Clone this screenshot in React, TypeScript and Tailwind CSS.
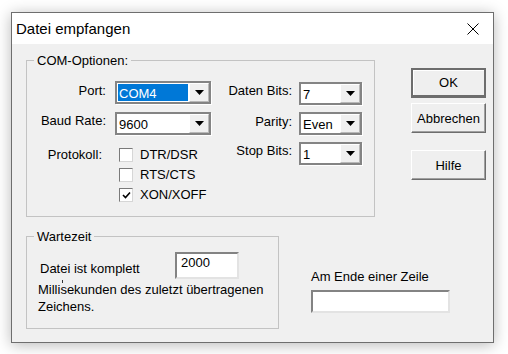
import React from "react";

const font = "font-['Liberation_Sans',Arial,sans-serif]";

const Arrow = () => (
  <svg width="9" height="5" viewBox="0 0 9 5">
    <path d="M0 0H9L4.5 5Z" fill="#000" />
  </svg>
);

interface IComboProps {
  value: string;
  width: string;
  selected?: boolean;
}

const Combo = ({ value, width, selected }: IComboProps) => (
  <div
    className={`${width} h-[23px] flex border-2 border-[#848484] bg-white shadow-[1px_1px_0_#ffffff]`}
  >
    <div className="flex-1 p-[1px]">
      {selected ? (
        <div className="h-full bg-[#0078d7] text-white pl-[1px] pt-[2px] leading-[15px]">
          {value}
        </div>
      ) : (
        <div className="pl-[1px] pt-[2px] leading-[15px]">{value}</div>
      )}
    </div>
    <div className="w-[20px] flex items-center justify-center bg-[#f0f0f0] border-l border-t border-white border-r border-b border-r-[#b8b8b8] border-b-[#b8b8b8]">
      <Arrow />
    </div>
  </div>
);

const Check = ({ label, checked }: { label: string; checked?: boolean }) => (
  <div className="flex items-center h-[14px]">
    <div className="w-[14px] h-[14px] bg-white border border-t-[#7a7a7a] border-l-[#7a7a7a] border-r-[#d6d6d6] border-b-[#d6d6d6] flex items-center justify-center">
      {checked && (
        <svg width="9" height="8" viewBox="0 0 9 8">
          <path d="M1 4L3.5 6.5L8 1.5" stroke="#000" strokeWidth="1.6" fill="none" />
        </svg>
      )}
    </div>
    <span className="ml-[7px] leading-[14px]">{label}</span>
  </div>
);

const Group = ({
  title,
  className,
  children,
}: {
  title: string;
  className: string;
  children: React.ReactNode;
}) => (
  <div className={`relative shrink-0 border border-[#c3c3c3] ${className}`}>
    <span className="absolute left-[7px] -top-[8px] px-[3px] bg-[#f0f0f0] leading-[15px]">
      {title}
    </span>
    {children}
  </div>
);

// one label + combo row
const Row = ({ children }: { children: React.ReactNode }) => (
  <div className="flex items-start h-[23px]">{children}</div>
);

const Button = ({ label, primary }: { label: string; primary?: boolean }) =>
  primary ? (
    <button className="h-[30px] w-full bg-[#efefef] border-2 border-[#6d6d6d] border-b-[3px] shadow-[inset_1px_1px_0_#ffffff] leading-[15px]">
      {label}
    </button>
  ) : (
    <button className="h-[30px] w-full bg-[#efefef] border border-t-white border-l-white border-r-[#6d6d6d] border-b-[#6d6d6d] shadow-[inset_-1px_-1px_0_#a0a0a0] leading-[15px]">
      {label}
    </button>
  );

export default function App() {
  return (
    <div className={`w-[508px] h-[354px] bg-white pt-[12px] pl-[11px] text-[13px] text-black ${font}`}>
      <div className="w-[483px] h-[331px] flex flex-col border border-[#6e6e6e] bg-[#f0f0f0] shadow-[0_2px_14px_rgba(0,0,0,0.28)]">
        {/* title bar */}
        <div className="h-[31px] bg-white flex items-center justify-between pl-[4px] pr-[14px]">
          <span className="text-[15px] leading-[31px]">Datei empfangen</span>
          <svg width="12" height="12" viewBox="0 0 12 12">
            <path d="M0.5 0.5L11.5 11.5M11.5 0.5L0.5 11.5" stroke="#000" strokeWidth="1" />
          </svg>
        </div>

        <div className="flex flex-1">
          <div className="ml-[14px] mt-[16px] w-[349px] shrink-0 flex flex-col">
            <Group title="COM-Optionen:" className="h-[157px]">
              <div className="flex pt-[20px]">
                <div className="w-[184px] flex flex-col">
                  <Row>
                    <span className="w-[79px] text-right mt-[2px] leading-[15px]">Port:</span>
                    <div className="ml-[9px]">
                      <Combo value="COM4" width="w-[96px]" selected />
                    </div>
                  </Row>
                  <div className="mt-[8px]">
                    <Row>
                      <span className="w-[79px] text-right mt-[1px] leading-[15px]">Baud Rate:</span>
                      <div className="ml-[9px]">
                        <Combo value="9600" width="w-[96px]" />
                      </div>
                    </Row>
                  </div>
                  <div className="mt-[13px] flex">
                    <span className="w-[75px] text-right leading-[14px]">Protokoll:</span>
                    <div className="ml-[17px] flex flex-col gap-[6px]">
                      <Check label="DTR/DSR" />
                      <Check label="RTS/CTS" />
                      <Check label="XON/XOFF" checked />
                    </div>
                  </div>
                </div>
                <div className="flex flex-col gap-[7px] pt-[1px]">
                  <Row>
                    <span className="w-[81px] text-right mt-[1px] leading-[15px]">Daten Bits:</span>
                    <div className="ml-[7px]">
                      <Combo value="7" width="w-[63px]" />
                    </div>
                  </Row>
                  <Row>
                    <span className="w-[81px] text-right mt-[2px] leading-[15px]">Parity:</span>
                    <div className="ml-[7px]">
                      <Combo value="Even" width="w-[63px]" />
                    </div>
                  </Row>
                  <Row>
                    <span className="w-[81px] text-right mt-[1px] leading-[15px]">Stop Bits:</span>
                    <div className="ml-[7px]">
                      <Combo value="1" width="w-[63px]" />
                    </div>
                  </Row>
                </div>
              </div>
            </Group>

            <div className="mt-[19px] flex">
              <Group title="Wartezeit" className="w-[253px] h-[93px]">
                <div className="pl-[11px] pt-[15px] flex flex-col">
                  <div className="flex items-start">
                    <span className="w-[135px] ml-[2px] mt-[9px] leading-[15px]">Datei ist komplett</span>
                    <div className="w-[64px] h-[27px] bg-white border-2 border-t-[#838383] border-l-[#838383] border-r-[#e3e3e3] border-b-[#e3e3e3] pl-[4px] pt-[1px] leading-[15px]">
                      2000
                    </div>
                  </div>
                  <p className="mt-[2px] leading-[17px] whitespace-nowrap">
                    Millisekunden des zuletzt übertragenen
                    <br />
                    Zeichens.
                  </p>
                </div>
                <span className="absolute left-[35px] top-[43px] w-[1px] h-[3px] bg-[#333]" />
              </Group>
              <div className="ml-[32px] mt-[33px] shrink-0 flex flex-col">
                <span className="leading-[15px] whitespace-nowrap">Am Ende einer Zeile</span>
                <div className="mt-[6px] w-[139px] h-[23px] bg-white border-2 border-t-[#838383] border-l-[#838383] border-r-[#e3e3e3] border-b-[#e3e3e3]" />
              </div>
            </div>
          </div>

          <div className="ml-[36px] mt-[24px] w-[75px] shrink-0 flex flex-col">
            <Button label="OK" primary />
            <div className="mt-[5px]">
              <Button label="Abbrechen" />
            </div>
            <div className="mt-[17px]">
              <Button label="Hilfe" />
            </div>
          </div>
        </div>
      </div>
    </div>
  );
}
